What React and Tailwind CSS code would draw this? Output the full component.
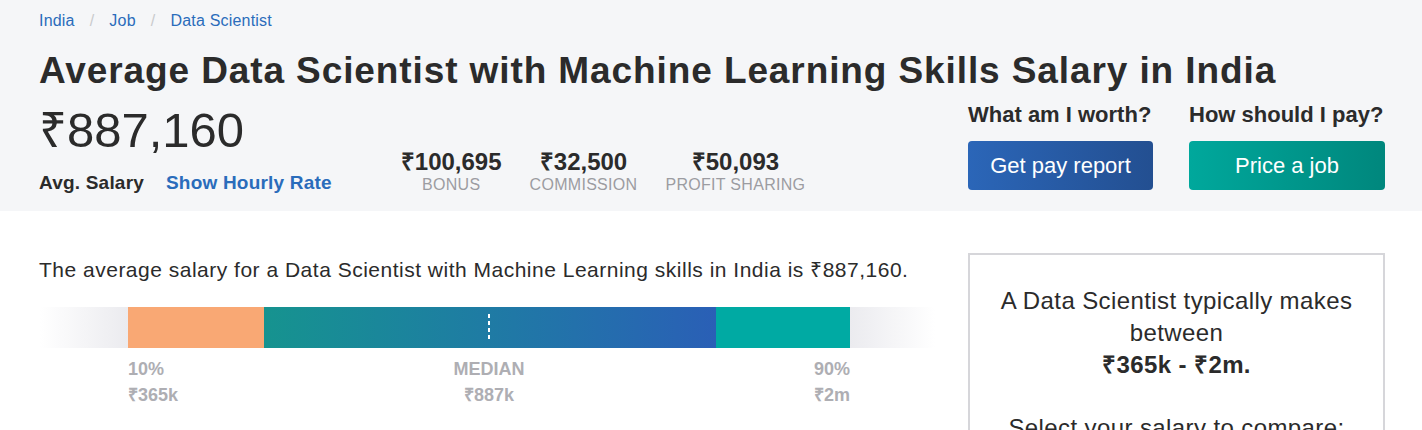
import React from 'react';

const font = { fontFamily: '"Liberation Sans", Arial, sans-serif' };

const extras = [
  { value: '₹100,695', label: 'BONUS' },
  { value: '₹32,500', label: 'COMMISSION' },
  { value: '₹50,093', label: 'PROFIT SHARING' },
];

const App = () => {
  return (
    <div className="w-[1422px] h-[430px] overflow-hidden bg-white text-[#2d2d2d]" style={font}>
      {/* Header */}
      <header className="bg-[#f5f6f8] h-[211px] pl-[39px] pr-[37px] pt-[9px]">
        <nav className="flex items-center text-[16px] leading-[24px] tracking-[0.2px] text-[#2a6cbb]">
          <a href="#">India</a>
          <span className="mx-[15px] text-[#c9cacd]">/</span>
          <a href="#">Job</a>
          <span className="mx-[15px] text-[#c9cacd]">/</span>
          <a href="#">Data Scientist</a>
        </nav>

        <h1 className="mt-[16px] text-[37px] leading-[44px] tracking-[0.9px] font-bold text-[#2b2b2b] whitespace-nowrap">
          Average Data Scientist with Machine Learning Skills Salary in India
        </h1>

        <div className="flex items-end h-[118px] pb-[15px]">
          <div className="flex flex-col">
            <div className="text-[49px] leading-[56px] text-[#2b2b2b]">₹887,160</div>
            <div className="flex items-center gap-[22px] text-[19px] leading-[26px] tracking-[0.2px] font-bold mt-[12px]">
              <span className="text-[#2b2b2b]">Avg. Salary</span>
              <a href="#" className="text-[#2a6cbb]">Show Hourly Rate</a>
            </div>
          </div>

          <div className="flex gap-[28px] ml-[69px] mb-[1px]">
            {extras.map((e) => (
              <div key={e.label} className="flex flex-col items-center">
                <span className="text-[24px] leading-[26px] font-bold text-[#2b2b2b]">{e.value}</span>
                <span className="text-[16px] leading-[20px] tracking-[0.3px] text-[#9c9ca1]">{e.label}</span>
              </div>
            ))}
          </div>

          <div className="flex gap-[36px] ml-auto mb-[6px]">
            <div className="flex flex-col w-[185px]">
              <span className="text-[22px] leading-[26px] font-bold text-[#2b2b2b] whitespace-nowrap">What am I worth?</span>
              <button className="mt-[13px] h-[49px] rounded-[4px] bg-gradient-to-r from-[#2b66b8] to-[#234f91] text-white text-[22px]">
                Get pay report
              </button>
            </div>
            <div className="flex flex-col w-[196px]">
              <span className="text-[22px] leading-[26px] font-bold text-[#2b2b2b] whitespace-nowrap">How should I pay?</span>
              <button className="mt-[13px] h-[49px] rounded-[4px] bg-gradient-to-r from-[#00a89c] to-[#00877d] text-white text-[22px]">
                Price a job
              </button>
            </div>
          </div>
        </div>
      </header>

      {/* Body */}
      <main className="flex gap-[33px] pl-[39px] pr-[37px] pt-[42px]">
        <section className="flex-1">
          <p className="mt-[3px] text-[21px] leading-[28px] tracking-[0.5px] text-[#2b2b2b] whitespace-nowrap">
            The average salary for a Data Scientist with Machine Learning skills in India is ₹887,160.
          </p>

          <div className="mt-[23px] flex h-[41px] ml-px">
            <div className="w-[88px] bg-gradient-to-r from-white to-[#ebebef]" />
            <div className="w-[136px] bg-[#f9a874]" />
            <div className="relative w-[452px] bg-gradient-to-r from-[#16938f] to-[#2a5fb6]">
              {/* median marker */}
              <div className="absolute left-[224px] top-[7px] bottom-[6px] w-[2px] bg-[repeating-linear-gradient(to_bottom,white_0_4px,transparent_4px_7px)]" />
            </div>
            <div className="w-[134px] bg-[#00aaa3]" />
            <div className="w-[85px] bg-gradient-to-r from-[#ebebef] to-white" />
          </div>

          <div className="flex ml-px mt-[8px]">
            <div className="w-[88px]" />
            <div className="grid grid-cols-3 w-[722px] text-[18px] leading-[26px] font-bold text-[#aeaeb3]">
              <div className="text-left">
                <div>10%</div>
                <div>₹365k</div>
              </div>
              <div className="text-center">
                <div>MEDIAN</div>
                <div>₹887k</div>
              </div>
              <div className="text-right">
                <div>90%</div>
                <div>₹2m</div>
              </div>
            </div>
          </div>
        </section>

        <aside className="w-[417px] h-[260px] border-2 border-[#d6d6da] text-center text-[24px] leading-[32px] tracking-[0.4px] text-[#2b2b2b] pt-[30px]">
          <p>A Data Scientist typically makes<br />between</p>
          <p className="font-bold">₹365k - ₹2m.</p>
          <p className="mt-[31px] whitespace-nowrap">Select your salary to compare:</p>
        </aside>
      </main>
    </div>
  );
};

export default App;
